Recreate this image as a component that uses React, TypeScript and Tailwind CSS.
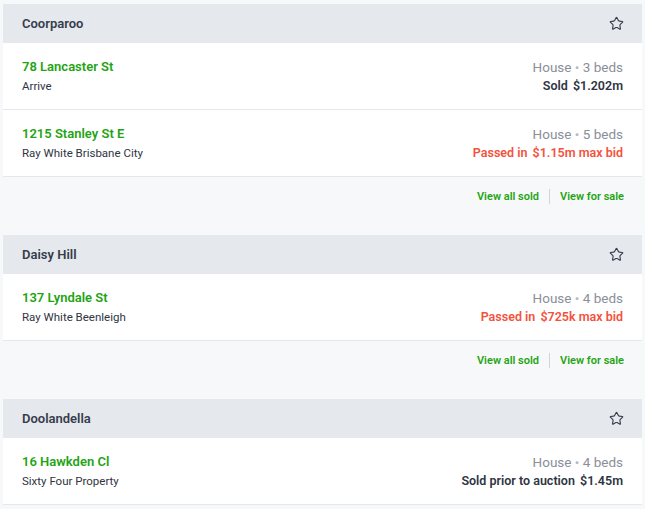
import { Star } from "lucide-react";

type Listing = {
  address: string;
  agency: string;
  type: string;
  beds: number;
  status: "sold" | "passed";
  label: string;
  price: string;
  suffix?: string;
};

type Suburb = {
  name: string;
  listings: Listing[];
  footer?: boolean;
};

const suburbs: Suburb[] = [
  {
    name: "Coorparoo",
    footer: true,
    listings: [
      { address: "78 Lancaster St", agency: "Arrive", type: "House", beds: 3, status: "sold", label: "Sold", price: "$1.202m" },
      { address: "1215 Stanley St E", agency: "Ray White Brisbane City", type: "House", beds: 5, status: "passed", label: "Passed in", price: "$1.15m", suffix: "max bid" },
    ],
  },
  {
    name: "Daisy Hill",
    footer: true,
    listings: [
      { address: "137 Lyndale St", agency: "Ray White Beenleigh", type: "House", beds: 4, status: "passed", label: "Passed in", price: "$725k", suffix: "max bid" },
    ],
  },
  {
    name: "Doolandella",
    listings: [
      { address: "16 Hawkden Cl", agency: "Sixty Four Property", type: "House", beds: 4, status: "sold", label: "Sold prior to auction", price: "$1.45m" },
    ],
  },
];

const ListingRow = ({ item }: { item: Listing }) => {
  const passed = item.status === "passed";
  return (
    <div className="flex h-[67px] items-start justify-between border-b border-[#e4e7ee] bg-white px-[19px] pt-[15px]">
      <div className="flex flex-col">
        <p className="text-[13px] leading-[18px] font-semibold text-[#1fa414]">{item.address}</p>
        <p className="mt-[2px] text-[11.5px] leading-[16px] text-[#2f3543]">{item.agency}</p>
      </div>
      <div className="flex flex-col items-end">
        <p className="text-[13.5px] leading-[18px] text-[#8a8f99]">
          {item.type} <span className="text-[#b4b8c0]">•</span> {item.beds} beds
        </p>
        <p className={`mt-[1px] text-[12.5px] leading-[18px] font-semibold ${passed ? "text-[#f4513d]" : "text-[#2f3543]"}`}>
          {item.label} <span className="ml-[2px]">{item.price}</span>
          {item.suffix && <span> {item.suffix}</span>}
        </p>
      </div>
    </div>
  );
};

const App = () => {
  return (
    <div className="min-h-[509px] bg-[#f7f8fa] px-[3px] pt-[4px] font-['Roboto',sans-serif]">
      {suburbs.map((s) => (
        <div key={s.name}>
          <div className="flex h-[39px] items-center justify-between bg-[#e5e8ed] pl-[19px] pr-[18px]">
            <p className="text-[13px] font-semibold text-[#363d4c]">{s.name}</p>
            <Star size={15} strokeWidth={1.8} className="text-[#363d4c]" />
          </div>
          {s.listings.map((l) => (
            <ListingRow key={l.address} item={l} />
          ))}
          {s.footer && (
            <div className="flex h-[58px] items-start justify-end pr-[18px] pt-[12px]">
              <a className="text-[11px] leading-[16px] font-semibold text-[#1fa414]">View all sold</a>
              <span className="mx-[10px] h-[15px] w-px bg-[#d0d4db]" />
              <a className="text-[11px] leading-[16px] font-semibold text-[#1fa414]">View for sale</a>
            </div>
          )}
        </div>
      ))}
    </div>
  );
};

export default App;
